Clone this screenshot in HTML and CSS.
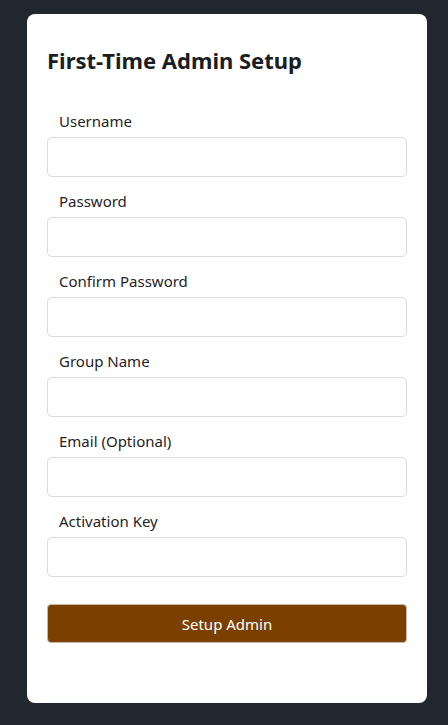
FILE: index.html
```html
<!DOCTYPE html>
<html lang="en">
<head>
<meta charset="utf-8">
<title>First-Time Admin Setup</title>
<link rel="stylesheet" href="styles.css">
</head>
<body>
<main class="card">
  <h2 class="title">First-Time Admin Setup</h2>
  <form class="form">
    <div class="field">
      <label class="label" for="u">Username</label>
      <input class="input" id="u" type="text">
    </div>
    <div class="field">
      <label class="label" for="p">Password</label>
      <input class="input" id="p" type="password">
    </div>
    <div class="field">
      <label class="label" for="c">Confirm Password</label>
      <input class="input" id="c" type="password">
    </div>
    <div class="field">
      <label class="label" for="g">Group Name</label>
      <input class="input" id="g" type="text">
    </div>
    <div class="field">
      <label class="label" for="e">Email (Optional)</label>
      <input class="input" id="e" type="email">
    </div>
    <div class="field">
      <label class="label" for="k">Activation Key</label>
      <input class="input" id="k" type="text">
    </div>
    <button class="button" type="button">Setup Admin</button>
  </form>
</main>
</body>
</html>
```
FILE: styles.css
```css
html, body {
  margin: 0;
  padding: 0;
  background: #21272e;
}
body {
  padding: 14px 21px 22px 27px;
  font-family: "Noto Sans", "DejaVu Sans", sans-serif;
  color: #1f2328;
}
.card {
  background: #ffffff;
  border-radius: 8px;
  padding: 30px 20px 60px 20px;
  box-sizing: border-box;
  width: 400px;
}
.title {
  margin: 0 0 35px 0;
  font-size: 22px;
  line-height: 32px;
  font-weight: 700;
  color: #1a1d21;
}
.form {
  display: flex;
  flex-direction: column;
}
.field {
  display: flex;
  flex-direction: column;
  margin-bottom: 14px;
}
.label {
  padding-left: 12px;
  font-size: 15px;
  line-height: 20px;
  margin-bottom: 6px;
}
.input {
  height: 40px;
  box-sizing: border-box;
  border: 1px solid #dcdcdc;
  border-radius: 5px;
  background: #fff;
  margin: 0;
}
.button {
  margin-top: 13px;
  height: 39px;
  box-sizing: border-box;
  border: 1px solid #c8b8a8;
  border-radius: 4px;
  background: #7b3f00;
  color: #ffffff;
  font-family: inherit;
  font-size: 15px;
}
```
